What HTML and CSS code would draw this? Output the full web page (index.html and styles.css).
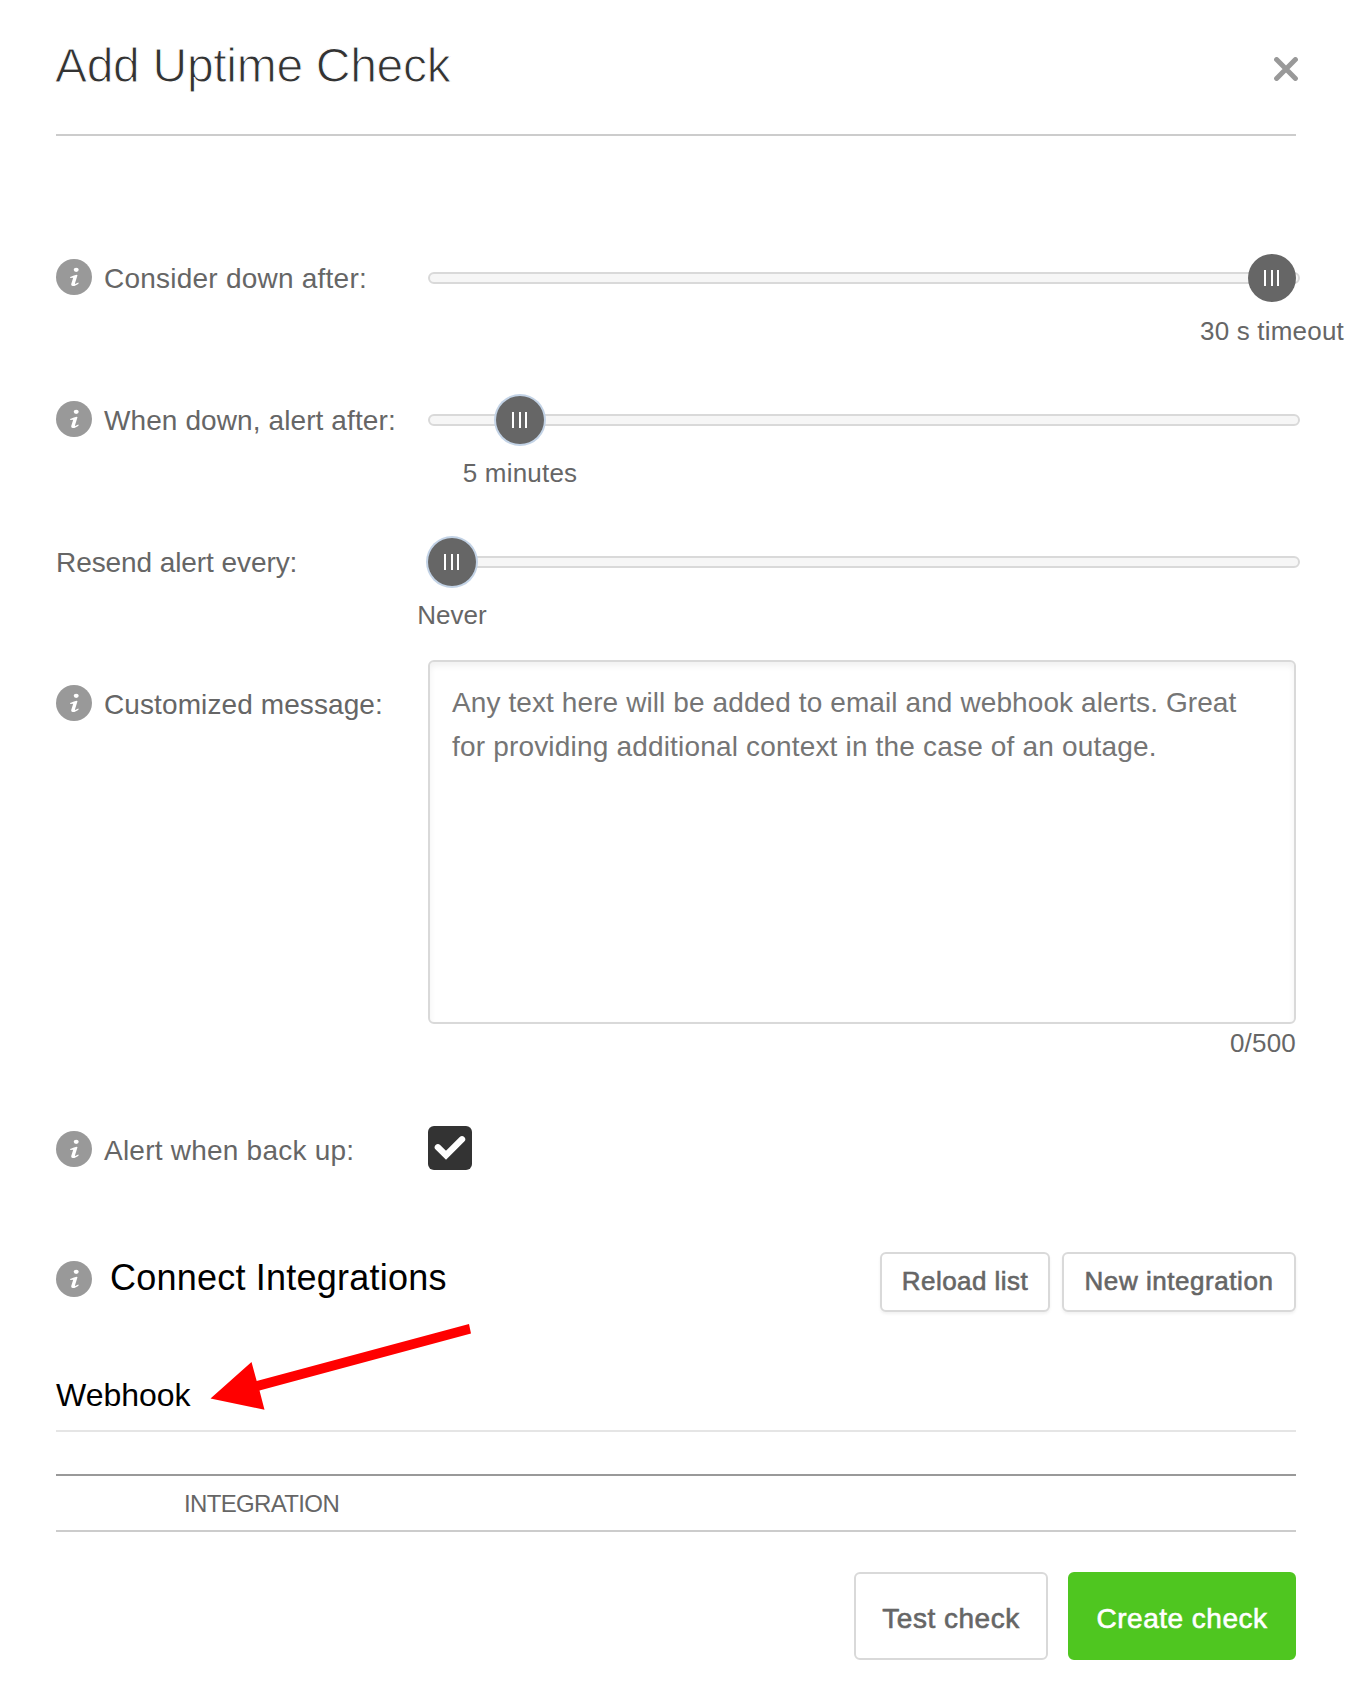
FILE: index.html
```html
<!DOCTYPE html>
<html lang="en">
<head>
<meta charset="utf-8">
<title>Add Uptime Check</title>
<link rel="stylesheet" href="styles.css">
</head>
<body>
<svg width="0" height="0" class="symbols">
  <symbol id="info" viewBox="0 0 36 36">
    <circle cx="18" cy="18" r="18" fill="#999"/>
    <ellipse cx="20.2" cy="10.8" rx="2.5" ry="2.1" fill="#fff"/>
    <path d="M14 18.1C16 17.3 18.3 16.2 20.6 15.7L21.5 16.2 19 24.2C18.8 25.1 19.4 25.1 20.2 24.6L22.3 23.6 22.8 24.2C21 26 18.6 27.2 16.8 27.1 15.4 27 15 26 15.3 24.8L17.2 18.7 14.4 19Z" fill="#fff"/>
  </symbol>
</svg>
<main class="dialog">
  <header class="dialog-header">
    <h1 class="title">Add Uptime Check</h1>
    <button class="close" aria-label="Close">
      <svg width="24" height="24" viewBox="0 0 24 24"><path d="M2.6 2.6 21.4 21.4M21.4 2.6 2.6 21.4" stroke="#999" stroke-width="5" stroke-linecap="round"/></svg>
    </button>
  </header>

  <form class="form">
    <div class="row">
      <div class="label"><svg class="info"><use href="#info"/></svg><span class="label-text wide">Consider down after:</span></div>
      <div class="slider">
        <div class="track"><div class="handle at-end"><i class="grip"></i><span class="value">30 s timeout</span></div></div>
      </div>
    </div>
    <div class="row">
      <div class="label"><svg class="info"><use href="#info"/></svg><span class="label-text">When down, alert after:</span></div>
      <div class="slider">
        <div class="track"><div class="handle focus at-five"><i class="grip"></i><span class="value">5 minutes</span></div></div>
      </div>
    </div>
    <div class="row row-last">
      <div class="label"><span class="label-text tight">Resend alert every:</span></div>
      <div class="slider">
        <div class="track"><div class="handle focus"><i class="grip"></i><span class="value tight">Never</span></div></div>
      </div>
    </div>
    <div class="row row-message">
      <div class="label"><svg class="info"><use href="#info"/></svg><span class="label-text">Customized message:</span></div>
      <div class="field">
        <div class="message" role="textbox" aria-multiline="true">
          <span class="line">Any text here will be added to email and webhook alerts. Great</span>
          <span class="line wide">for providing additional context in the case of an outage.</span>
        </div>
        <div class="counter">0/500</div>
      </div>
    </div>
    <div class="row row-backup">
      <div class="label"><svg class="info"><use href="#info"/></svg><span class="label-text wide">Alert when back up:</span></div>
      <span class="checkbox" role="checkbox" aria-checked="true">
        <svg width="44" height="44" viewBox="0 0 44 44"><path d="M9.9 21.3 18 29.3 34 13.3" fill="none" stroke="#fff" stroke-width="6.4" stroke-linecap="round"/></svg>
      </span>
    </div>
  </form>

  <section class="integrations">
    <div class="integrations-header">
      <svg class="info"><use href="#info"/></svg>
      <h2 class="subtitle">Connect Integrations</h2>
      <button class="btn btn-reload">Reload list</button>
      <button class="btn btn-new">New integration</button>
    </div>
    <div class="group">
      <h3 class="group-title">Webhook</h3>
      <svg class="arrow" width="262" height="88" viewBox="0 0 262 88"><path d="M.5 76.5 41.5 40 46.7 59 259 2 261 11.5 49.5 68.5 54.5 87.8Z" fill="#f00"/></svg>
    </div>
    <div class="table-head">INTEGRATION</div>
  </section>

  <footer class="footer">
    <button class="btn btn-test">Test check</button>
    <button class="btn btn-create">Create check</button>
  </footer>
</main>
</body>
</html>
```

FILE: styles.css
```css
* { box-sizing: border-box; }

body {
  margin: 0;
  background: #fff;
  color: #666;
  font-family: "Liberation Sans", Arial, sans-serif;
  font-size: 28px;
}

h1, h2, h3 { margin: 0; font-weight: 400; }

button { font-family: inherit; padding: 0; }

.symbols { display: none; }

.dialog {
  width: 1348px;
  height: 1700px;
  padding: 0 52px 0 56px;
  overflow: hidden;
}

.dialog-header {
  display: flex;
  justify-content: space-between;
  align-items: flex-start;
  height: 136px;
  border-bottom: 2px solid #ccc;
}

.title {
  margin: 36px 0 0 -1px;
  font-size: 48px;
  line-height: 60px;
  letter-spacing: -0.3px;
  color: #333;
  -webkit-text-stroke: 1px #fff;
}

.close {
  margin: 57px -2px 0 0;
  width: 24px;
  height: 24px;
  border: 0;
  background: none;
}

.close svg { display: block; }

.form { padding-top: 118px; }

.row {
  display: grid;
  grid-template-columns: 372px 1fr;
  align-items: start;
  height: 142px;
}

.row-last { height: 122px; }
.row-message { height: 466px; }
.row-message .label { margin-top: 20px; }
.row-backup { height: 126px; }

.label {
  display: flex;
  align-items: center;
  height: 48px;
}

.label-text {
  padding-top: 2px;
  line-height: 48px;
  letter-spacing: 0.1px;
  white-space: nowrap;
}

.label-text.wide { letter-spacing: 0.23px; }
.label-text.tight { letter-spacing: -0.08px; }

.info {
  flex: none;
  width: 36px;
  height: 36px;
  margin: 0 12px 3px 0;
}

.slider {
  display: flex;
  align-items: center;
  width: 872px;
  height: 48px;
}

.track {
  display: flex;
  align-items: center;
  width: 872px;
  height: 12px;
  border: 2px solid #d9d9d9;
  border-radius: 6px;
  background: #f6f6f6;
}

.handle {
  position: relative;
  flex: none;
  display: flex;
  align-items: center;
  justify-content: center;
  width: 48px;
  height: 48px;
  margin-left: -2px;
  border-radius: 50%;
  background: #666;
}

.handle.focus { box-shadow: 0 0 0 2px #c3d3e6; }
.handle.at-five { margin-left: 66px; }
.handle.at-end { margin-left: 818px; }

.grip {
  width: 16px;
  height: 16px;
  background: linear-gradient(90deg, transparent 0.5px, #fff 0.5px 2.5px, transparent 2.5px 7px, #fff 7px 9px, transparent 9px 13.5px, #fff 13.5px 15.5px, transparent 15.5px);
}

.value {
  position: absolute;
  top: 61px;
  left: 50%;
  transform: translateX(-50%);
  font-size: 26px;
  line-height: 32px;
  letter-spacing: 0.2px;
  white-space: nowrap;
}

.value.tight { letter-spacing: 0; }

.message {
  height: 364px;
  padding: 19px 22px;
  border: 2px solid #d9d9d9;
  border-radius: 6px;
  box-shadow: inset 0 4px 6px rgba(0, 0, 0, 0.06);
  color: #757575;
}

.line {
  display: block;
  line-height: 44px;
  letter-spacing: 0.1px;
  white-space: nowrap;
}

.line.wide { letter-spacing: 0.18px; }

.counter {
  margin-top: 3px;
  font-size: 26px;
  line-height: 32px;
  letter-spacing: 0.2px;
  text-align: right;
}

.checkbox {
  width: 44px;
  height: 44px;
  border-radius: 6px;
  background: #333;
}

.checkbox svg { display: block; }

.integrations-header {
  display: flex;
  align-items: center;
  height: 60px;
}

.integrations-header .info { margin: 0 18px 7px 0; }

.subtitle {
  flex: 1;
  margin-bottom: 8px;
  font-size: 36px;
  line-height: 44px;
  letter-spacing: 0.22px;
  color: #000;
}

.btn {
  border: 2px solid #d9d9d9;
  border-radius: 6px;
  background: #fff;
  color: #666;
  font-size: 28px;
  white-space: nowrap;
  -webkit-text-stroke: 0.6px currentColor;
}

.btn-reload, .btn-new {
  height: 60px;
  padding-bottom: 2px;
  font-size: 26px;
  box-shadow: 0 2px 3px rgba(0, 0, 0, 0.06);
}

.btn-reload { width: 170px; letter-spacing: 0.45px; }
.btn-new { width: 234px; margin-left: 12px; letter-spacing: 0.55px; }

.group {
  position: relative;
  padding: 63px 0 15px;
  border-bottom: 2px solid #e5e5e5;
}

.group-title {
  font-size: 32px;
  line-height: 40px;
  letter-spacing: 0;
  color: #000;
}

.arrow {
  position: absolute;
  left: 154px;
  top: 10px;
}

.table-head {
  margin-top: 42px;
  padding: 1px 0 0 128px;
  border-top: 2px solid #999;
  border-bottom: 2px solid #ccc;
  font-size: 24px;
  line-height: 53px;
  letter-spacing: -0.65px;
}

.footer {
  display: flex;
  justify-content: flex-end;
  gap: 20px;
  margin-top: 40px;
}

.btn-test, .btn-create {
  height: 88px;
  padding-top: 6px;
}

.btn-test { width: 194px; letter-spacing: 0.5px; }

.btn-create {
  width: 228px;
  border-color: #4fc620;
  background: #4fc620;
  color: #fff;
  letter-spacing: 0.5px;
}
```
